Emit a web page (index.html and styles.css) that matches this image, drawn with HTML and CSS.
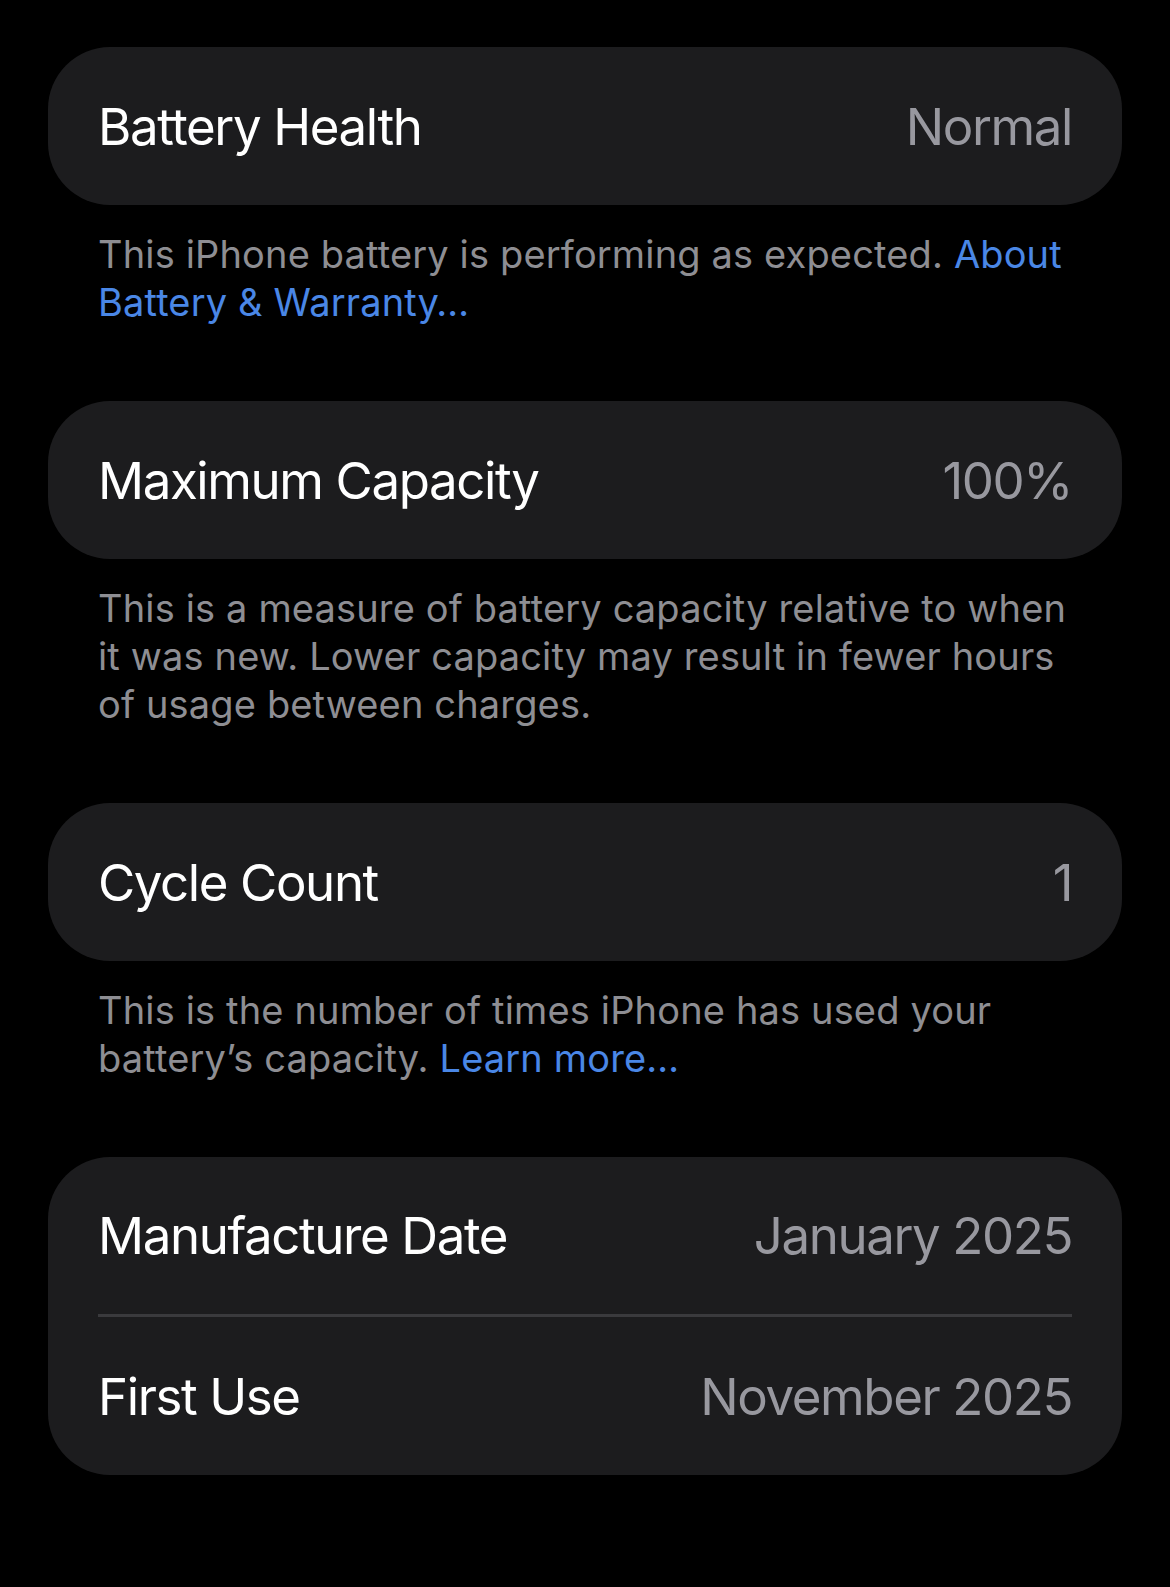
FILE: index.html
```html
<!DOCTYPE html>
<html lang="en">
<head>
    <meta charset="utf-8">
    <title>Battery Health</title>
    <link rel="stylesheet" href="styles.css">
</head>
<body>
    <main class="settings">
        <section class="group">
            <div class="card">
                <div class="row">
                    <span class="label">Battery Health</span>
                    <span class="value">Normal</span>
                </div>
            </div>
            <p class="note">This iPhone battery is performing as expected. <a href="#">About Battery &amp; Warranty…</a></p>
        </section>

        <section class="group">
            <div class="card">
                <div class="row">
                    <span class="label">Maximum Capacity</span>
                    <span class="value">100%</span>
                </div>
            </div>
            <p class="note">This is a measure of battery capacity relative to when it was new. Lower capacity may result in fewer hours of usage between charges.</p>
        </section>

        <section class="group">
            <div class="card">
                <div class="row">
                    <span class="label">Cycle Count</span>
                    <span class="value">1</span>
                </div>
            </div>
            <p class="note">This is the number of times iPhone has used your battery’s capacity. <a href="#">Learn more…</a></p>
        </section>

        <section class="group">
            <div class="card">
                <div class="row">
                    <span class="label">Manufacture Date</span>
                    <span class="value">January 2025</span>
                </div>
                <div class="row">
                    <span class="label">First Use</span>
                    <span class="value">November 2025</span>
                </div>
            </div>
        </section>
    </main>
</body>
</html>
```

FILE: styles.css
```css
body {
    margin: 0;
    background-color: #000;
    font-family: Inter, "Noto Sans", sans-serif;
    -webkit-font-smoothing: antialiased;
}
.settings {
    padding: 47px 48px 0;
}
.card {
    background-color: #1c1c1e;
    border-radius: 62px;
    padding: 0 50px;
}
.row {
    display: flex;
    align-items: center;
    justify-content: space-between;
    height: 158px;
    font-size: 51px;
    letter-spacing: -1.4px;
}
.card .row:not(:last-child) {
    height: 157px;
    border-bottom: 3px solid #3a3a3d;
}
.label {
    color: #fff;
}
.value {
    color: #98989f;
}
.note {
    margin: 25px 0 75px;
    padding: 0 50px;
    font-size: 38px;
    line-height: 48px;
    letter-spacing: 0.15px;
    color: #8e8e93;
}
.note a {
    color: #4a87e6;
    text-decoration: none;
}
```
